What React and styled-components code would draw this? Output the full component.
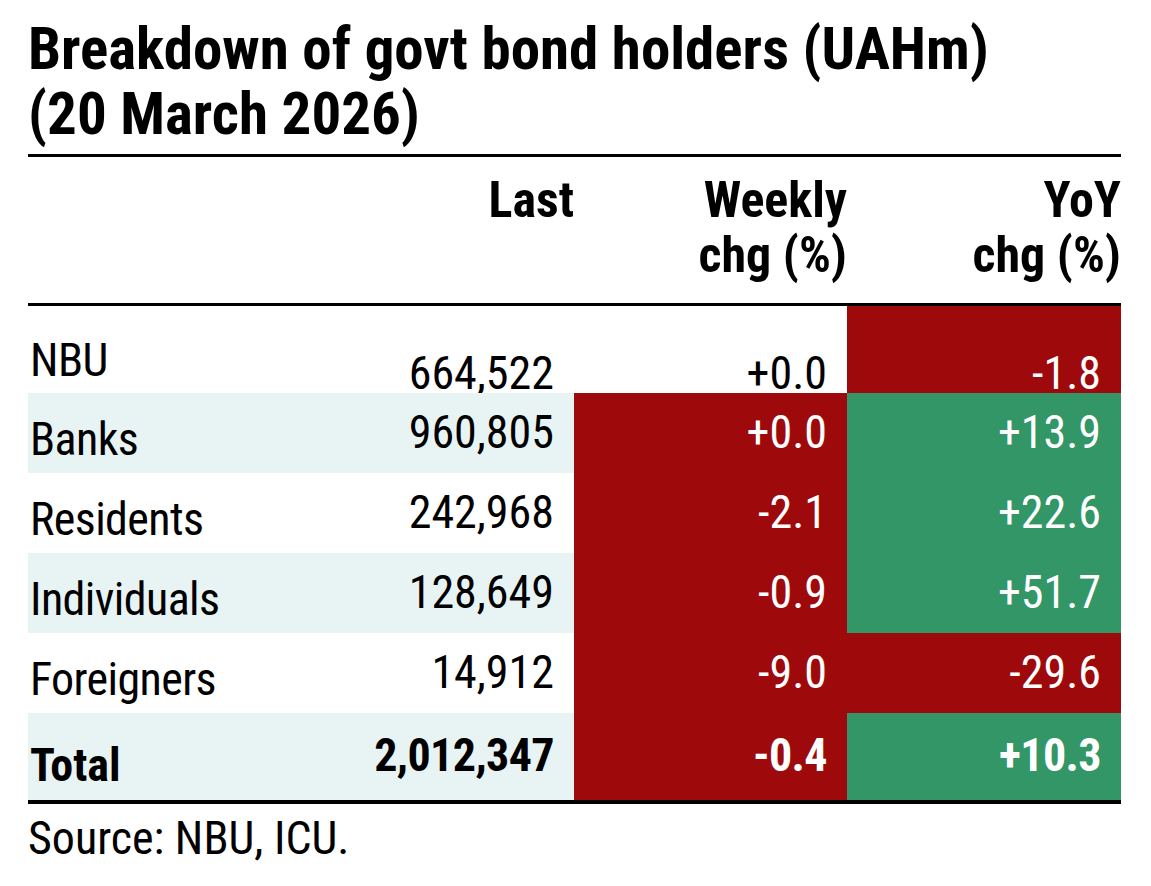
import styled, { createGlobalStyle } from 'styled-components'

const RED = '#9e0a0b'
const GREEN = '#339666'
const TINT = '#e8f4f4'

const rows = [
  { label: 'NBU', last: '664,522', weekly: '+0.0', yoy: '-1.8', wk: null, yy: 'red', first: true },
  { label: 'Banks', last: '960,805', weekly: '+0.0', yoy: '+13.9', wk: 'red', yy: 'green', tint: true },
  { label: 'Residents', last: '242,968', weekly: '-2.1', yoy: '+22.6', wk: 'red', yy: 'green' },
  { label: 'Individuals', last: '128,649', weekly: '-0.9', yoy: '+51.7', wk: 'red', yy: 'green', tint: true },
  { label: 'Foreigners', last: '14,912', weekly: '-9.0', yoy: '-29.6', wk: 'red', yy: 'red' },
  { label: 'Total', last: '2,012,347', weekly: '-0.4', yoy: '+10.3', wk: 'red', yy: 'green', tint: true, total: true },
]

const fills = { red: RED, green: GREEN }

function App() {
  return (
    <Page>
      <GlobalStyle />
      <Title>
        Breakdown of govt bond holders (UAHm)
        <br />
        (20 March 2026)
      </Title>
      <Table>
        <HeadRow>
          <HeadCell />
          <HeadCell>Last</HeadCell>
          <HeadCell>Weekly<br />chg (%)</HeadCell>
          <HeadCell>YoY<br />chg (%)</HeadCell>
        </HeadRow>
        {rows.map(r => (
          <Row key={r.label} $first={r.first} $total={r.total}>
            <Label $tint={r.tint} $first={r.first} $total={r.total}>{r.label}</Label>
            <Value $tint={r.tint} $first={r.first} $total={r.total}>{r.last}</Value>
            <Value $fill={fills[r.wk]} $first={r.first} $total={r.total}>{r.weekly}</Value>
            <Value $fill={fills[r.yy]} $first={r.first} $total={r.total}>{r.yoy}</Value>
          </Row>
        ))}
      </Table>
      <Source>Source: NBU, ICU.</Source>
    </Page>
  )
}

const GlobalStyle = createGlobalStyle`
  body {
    margin: 0;
    background: #fff;
    font-family: Roboto, "Liberation Sans", Arial, sans-serif;
    font-stretch: condensed;
    color: #000;
  }
`

const Page = styled.div`
  width: 1093px;
  padding: 16px 0 0 28px;
`

const Title = styled.h1`
  margin: 0 0 8px;
  font-size: 59px;
  line-height: 65px;
  font-weight: 700;
  white-space: nowrap;
`

const Table = styled.div`
  border-top: 3px solid #000;
  border-bottom: 4px solid #000;
`

const columns = '300px 246px 273px 274px'

const HeadRow = styled.div`
  display: grid;
  grid-template-columns: ${columns};
  height: 146px;
  border-bottom: 3px solid #000;
`

const HeadCell = styled.div`
  padding-top: 16px;
  text-align: right;
  font-size: 50px;
  line-height: 55px;
  font-weight: 700;
`

const Row = styled.div`
  display: grid;
  grid-template-columns: ${columns};
  height: ${p => (p.$first || p.$total ? 87 : 80)}px;
`

const Label = styled.div`
  padding: ${p => (p.$first ? 31 : p.$total ? 29 : 23)}px 0 0 2px;
  background: ${p => (p.$tint ? TINT : '#fff')};
  font-size: 46px;
  line-height: 46px;
  letter-spacing: ${p => (p.$total ? 0 : -0.6)}px;
  font-weight: ${p => (p.$total ? 700 : 400)};
`

const Value = styled.div`
  padding: ${p => (p.$first ? 44 : p.$total ? 19 : 16)}px 20px 0 0;
  background: ${p => p.$fill || (p.$tint ? TINT : '#fff')};
  color: ${p => (p.$fill ? '#fff' : '#000')};
  text-align: right;
  font-size: 46px;
  line-height: 46px;
  letter-spacing: ${p => (p.$total ? -0.6 : 0)}px;
  font-weight: ${p => (p.$total ? 700 : 400)};
`

const Source = styled.div`
  margin-top: 11px;
  font-size: 46px;
  line-height: 46px;
`

export default App
